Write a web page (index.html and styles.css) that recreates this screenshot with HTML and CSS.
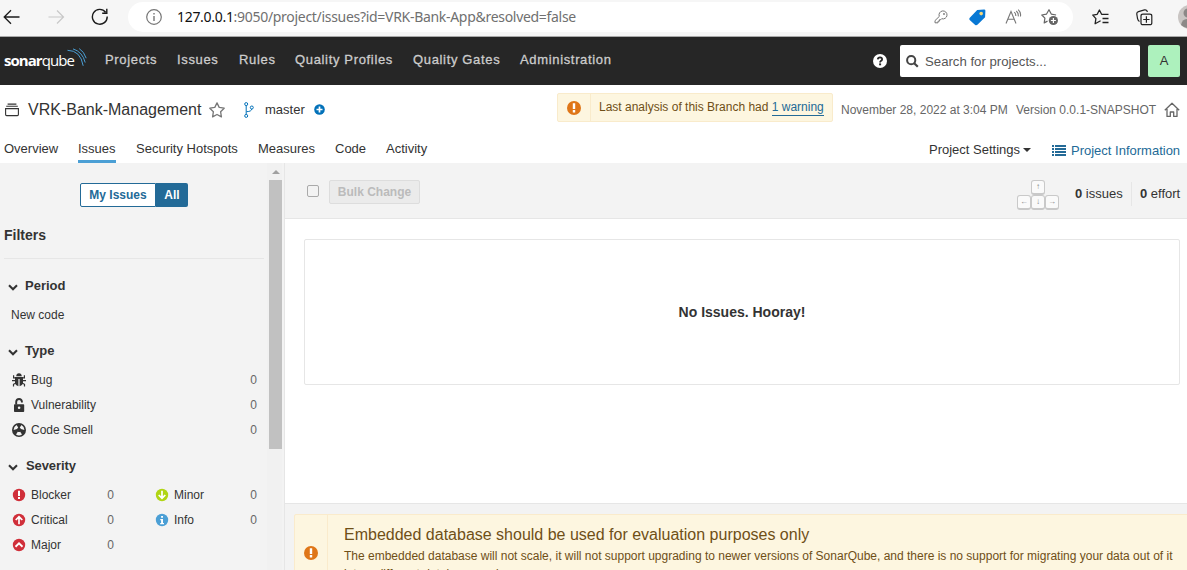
FILE: index.html
```html
<!DOCTYPE html>
<html lang="en">
<head>
<meta charset="utf-8">
<title>Issues - VRK-Bank-Management</title>
<link rel="stylesheet" href="styles.css">
</head>
<body>
<div class="browser">
  <svg class="b-back" width="18" height="16" viewBox="0 0 18 16"><path d="M16.5 8H1.5M8 1.2L1.2 8L8 14.8" fill="none" stroke="#1b1b1b" stroke-width="1.3"/></svg>
  <svg class="b-fwd" width="18" height="16" viewBox="0 0 18 16"><path d="M.5 8H15.5M9 1.5L15.5 8L9 14.5" fill="none" stroke="#c8c8c8" stroke-width="1.2"/></svg>
  <svg class="b-reload" width="18" height="18" viewBox="0 0 18 18"><path d="M16.2 8.5A7.4 7.4 0 1 1 14.6 4.2M15.8 .8V5.3H11.2" fill="none" stroke="#1b1b1b" stroke-width="1.4"/></svg>
  <div class="address">
    <svg class="b-info" width="16" height="16" viewBox="0 0 16 16"><circle cx="8" cy="8" r="7.3" fill="none" stroke="#767676" stroke-width="1.2"/><path d="M8 7V12M8 4V5.6" stroke="#767676" stroke-width="1.4"/></svg>
    <span class="url"><b>127.0.0.1</b>:9050/project/issues?id=VRK-Bank-App&amp;resolved=false</span>
    <svg class="b-key" width="14" height="14" viewBox="0 0 14 14"><path d="M5.3 6.4A4 4 0 1 1 7.7 8.7L6.8 9.7H5.4V11.2H4V12.8H1V10.6Z" fill="none" stroke="#777" stroke-linejoin="round"/><circle cx="10" cy="4" r=".9" fill="#777"/></svg>
    <svg class="b-tag" width="17" height="17" viewBox="0 0 17 17"><path d="M8.2 .9L15 .5Q16.4 .4 16.4 1.8L16.1 8.2L8.4 15.8Q7.3 16.7 6.2 15.9L.7 11Q-.1 9.8 .8 8.7Z" fill="#0878d4"/><circle cx="12.2" cy="4.6" r="1.8" fill="#f5d77a"/></svg>
    <svg class="b-read" width="17" height="16" viewBox="0 0 17 16"><path d="M1 14.5L6 2.5L11 14.5M2.9 10.2H9.1M9.3 3.2Q11 4.8 10.8 7M11.3 2Q13.7 4.3 13.2 7.3M13.2 .7Q16.3 3.6 15.4 7.5" fill="none" stroke="#777" stroke-width="1.1"/></svg>
    <svg class="b-fav" width="18" height="18" viewBox="0 0 18 18"><path d="M6.5 13.1L3.2 14.9L3.9 10.2L.8 7L5.4 6.2L8 1.7L10.4 6.2L15.1 7" fill="none" stroke="#666" stroke-width="1.2" stroke-linejoin="round"/><circle cx="12.4" cy="12.5" r="4.6" fill="#666"/><path d="M12.4 10V15M9.9 12.5H14.9" stroke="#fff" stroke-width="1.2"/></svg>
  </div>
  <svg class="b-favs" width="18" height="16" viewBox="0 0 18 16"><path d="M8.6 11.8L3.1 14.8L3.9 9.6L.8 6.1L5.2 5.3L7.4 1L9.6 5.3H16.5M10.5 9.5H16.5M10.5 13.5H16.5" fill="none" stroke="#222" stroke-width="1.3" stroke-linejoin="round"/></svg>
  <svg class="b-coll" width="17" height="17" viewBox="0 0 17 17"><path d="M3.5 12.5C2 12 1.8 10.8 1.5 9.5L.8 5.2Q.5 3.2 2.5 2.6L8.5 .9Q10.5 .5 11.2 2.3V3M5 6.9Q5 5.2 7 5.2H13.8Q15.8 5.2 15.8 6.9V13.9Q15.8 15.7 13.8 15.7H7Q5 15.7 5 13.9ZM10.4 7.2V13.7M7.2 10.5H13.6" fill="none" stroke="#222" stroke-width="1.2"/></svg>
  <svg class="b-user" width="9" height="24" viewBox="0 0 9 24"><circle cx="12" cy="12" r="12" fill="#c9c5c3"/><circle cx="10" cy="8" r="4.5" fill="#8c8887"/><path d="M3 20Q4 14 9 14V23Q5 22 3 20Z" fill="#8c8887"/></svg>
</div>

<header class="global">
  <div class="logo"><span class="logo-b">sonar</span><span class="logo-l">qube</span>
    <svg class="waves" width="20" height="19" viewBox="0 0 20 19"><path d="M.5 2.3Q13.5 2.3 16.2 17.8M6 .9Q15.5 3.8 18.2 14.5M12.2 .6Q17 3.5 19.2 10.2" fill="none" stroke="#4b9fd5" stroke-width="1"/></svg>
  </div>
  <nav class="menu"><a class="m1">Projects</a><a class="m2">Issues</a><a class="m3">Rules</a><a class="m4">Quality Profiles</a><a class="m5">Quality Gates</a><a class="m6">Administration</a></nav>
  <svg class="help" width="14" height="14" viewBox="0 0 14 14"><circle cx="7" cy="7" r="7" fill="#fff"/><path d="M4.8 5.3Q5 3.4 7 3.4Q9.2 3.5 9.1 5.3Q9 6.4 7.8 7Q7.1 7.4 7.1 8.4" fill="none" stroke="#262626" stroke-width="1.8"/><rect x="6.1" y="9.4" width="2" height="1.9" fill="#262626"/></svg>
  <div class="search"><svg width="13" height="13" viewBox="0 0 13 13"><circle cx="5.2" cy="5.2" r="4.1" fill="none" stroke="#444" stroke-width="2"/><path d="M8.2 8.2L11.8 11.8" stroke="#444" stroke-width="2.2"/></svg><span>Search for projects...</span></div>
  <div class="avatar">A</div>
</header>

<section class="project">
  <div class="crumbs">
    <svg class="p-icon" width="14" height="14" viewBox="0 0 14 14"><path d="M.6 5.6H13.4V11.6Q13.4 12.6 12.4 12.6H1.6Q.6 12.6 .6 11.6ZM1.2 3.3H12.8M2.6 1.1H11.4" fill="none" stroke="#333" stroke-width="1.1"/></svg>
    <h1>VRK-Bank-Management</h1>
    <svg class="star" width="16" height="16" viewBox="0 0 16 16"><path d="M8 .9L10.2 5.4L15.2 6.2L11.6 9.7L12.4 14.9L8 12.5L3.6 14.9L4.4 9.7L.8 6.2L5.8 5.4Z" fill="none" stroke="#777" stroke-width="1.3" stroke-linejoin="round"/></svg>
    <svg class="branch" width="10" height="16" viewBox="0 0 10 16"><g fill="none" stroke="#0271b9"><circle cx="2.2" cy="2.1" r="1.5"/><circle cx="2.2" cy="13.9" r="1.5"/><circle cx="7.8" cy="5.5" r="1.5"/><path d="M2.2 3.6V12.4M7.8 7Q7.5 9.5 2.5 9.7"/></g></svg>
    <span class="master">master</span>
    <svg class="plus" width="11" height="11" viewBox="0 0 11 11"><circle cx="5.5" cy="5.5" r="5.3" fill="#0271b9"/><path d="M5.5 2.5V8.5M2.5 5.5H8.5" stroke="#fff" stroke-width="1.7"/></svg>
    <div class="warning"><span class="warn-icon"><svg width="14" height="14" viewBox="0 0 14 14"><circle cx="7" cy="7" r="7" fill="#df7618"/><path d="M5.8 2.3H8.2V8H5.8ZM5.8 9.1H8.2V11.4H5.8Z" fill="#fff"/></svg></span><span class="warn-text">Last analysis of this Branch had <a>1 warning</a></span></div>
    <span class="date">November 28, 2022 at 3:04 PM</span>
    <span class="version">Version 0.0.1-SNAPSHOT</span>
    <svg class="home" width="16" height="16" viewBox="0 0 16 16"><path d="M.8 8.2L8 1.2L15.2 8.2M3 7V14.4H6.3V10H9.7V14.4H13V7" fill="none" stroke="#666" stroke-width="1.3" stroke-linejoin="round"/></svg>
  </div>
  <nav class="tabs"><a class="t1">Overview</a><a class="t2 active">Issues</a><a class="t3">Security Hotspots</a><a class="t4">Measures</a><a class="t5">Code</a><a class="t6">Activity</a>
    <span class="settings">Project Settings</span><i class="caret"></i>
    <svg class="list" width="14" height="11" viewBox="0 0 14 11"><path d="M0 1H2M3 1H14M0 4H2M3 4H14M0 7H2M3 7H14M0 10H2M3 10H14" stroke="#236a97" stroke-width="2"/></svg><span class="info">Project Information</span>
  </nav>
</section>

<div class="page">
  <aside class="side">
    <div class="filters">
      <div class="toggle"><button class="mine">My Issues</button><button class="all">All</button></div>
      <h2>Filters</h2>
      <div class="facet period"><svg class="chev" width="10" height="7" viewBox="0 0 10 7"><path d="M1 1.3L5 5.2L9 1.3" fill="none" stroke="#333" stroke-width="2.1"/></svg>Period</div>
      <div class="newcode">New code</div>
      <div class="facet type"><svg class="chev" width="10" height="7" viewBox="0 0 10 7"><path d="M1 1.3L5 5.2L9 1.3" fill="none" stroke="#333" stroke-width="2.1"/></svg>Type</div>
      <div class="row"><svg width="14" height="14" viewBox="0 0 14 14"><path d="M4.2 3.2Q4.4 .3 7 .3Q9.6 .3 9.8 3.2ZM3 4H11V10.2Q10.2 13 7.6 13.3V6H6.4V13.3Q3.8 13 3 10.2Z" fill="#333"/><path d="M3.7 4.8H1.6V2.2M10.3 4.8H12.4V2.2M4 7.7H0M10 7.7H14M4 10L1.5 11.3V13.6M10 10L12.5 11.3V13.6" fill="none" stroke="#333" stroke-width="1.2"/></svg><span>Bug</span><b>0</b></div>
      <div class="row"><svg width="14" height="14" viewBox="0 0 14 14"><path d="M4.2 6.5V3.9Q4.3 1 7.1 1Q9.6 1 9.9 3.7V4.6" fill="none" stroke="#333" stroke-width="1.9"/><path fill-rule="evenodd" d="M2.5 6.2H11.4Q12.2 6.2 12.2 7V13.2Q12.2 14 11.4 14H2.8Q2 14 2 13.2V7Q2 6.2 2.8 6.2ZM7.1 8.5A1.3 1.3 0 0 0 7.1 11.1A1.3 1.3 0 0 0 7.1 8.5Z" fill="#333"/></svg><span>Vulnerability</span><b>0</b></div>
      <div class="row"><svg width="14" height="14" viewBox="0 0 14 14"><circle cx="7" cy="7" r="7" fill="#333"/><path d="M5 6.1L1.6 7Q1.7 3.6 4.5 2L6.2 4.6ZM9 6.1L12.4 7Q12.3 3.6 9.5 2L7.8 4.6ZM5.8 8.7L4 11.5Q7 13.3 10 11.5L8.2 8.7Q7 9.3 5.8 8.7Z" fill="#f3f3f3"/></svg><span>Code Smell</span><b>0</b></div>
      <div class="facet severity"><svg class="chev" width="10" height="7" viewBox="0 0 10 7"><path d="M1 1.3L5 5.2L9 1.3" fill="none" stroke="#333" stroke-width="2.1"/></svg>Severity</div>
      <div class="grid">
        <div class="row"><svg width="14" height="14" viewBox="0 0 14 14"><circle cx="7" cy="7" r="6.2" fill="#d02f3a"/><path d="M6 2.8H8V8H6ZM6 9.1H8V11.1H6Z" fill="#fff"/></svg><span>Blocker</span><b>0</b></div>
        <div class="row"><svg width="14" height="14" viewBox="0 0 14 14"><circle cx="7" cy="7" r="6.2" fill="#b0d513"/><path d="M7 2.8V10M3.7 7L7 10.2L10.3 7" fill="none" stroke="#fff" stroke-width="1.7"/></svg><span>Minor</span><b>0</b></div>
        <div class="row"><svg width="14" height="14" viewBox="0 0 14 14"><circle cx="7" cy="7" r="6.2" fill="#d02f3a"/><path d="M7 11.2V4M3.7 7L7 3.8L10.3 7" fill="none" stroke="#fff" stroke-width="1.7"/></svg><span>Critical</span><b>0</b></div>
        <div class="row"><svg width="14" height="14" viewBox="0 0 14 14"><circle cx="7" cy="7" r="6.2" fill="#4b9fd5"/><path d="M6.1 2.9H8V4.7H6.1ZM5.3 6H8V10H9V11.2H5.2V10H6.1V7.2H5.3Z" fill="#fff"/></svg><span>Info</span><b>0</b></div>
        <div class="row"><svg width="14" height="14" viewBox="0 0 14 14"><circle cx="7" cy="7" r="6.2" fill="#d02f3a"/><path d="M3.5 8.7L7 5.4L10.5 8.7" fill="none" stroke="#fff" stroke-width="1.9"/></svg><span>Major</span><b>0</b></div>
      </div>
    </div>
    <div class="scroll"><i class="up"></i><div class="thumb"></div></div>
  </aside>
  <main>
    <div class="toolbar">
      <span class="check"></span><button class="bulk">Bulk Change</button>
      <div class="keys"><div><kbd>↑</kbd></div><div><kbd>←</kbd><kbd>↓</kbd><kbd>→</kbd></div></div>
      <span class="count"><b>0</b> issues</span><span class="effort"><b>0</b> effort</span>
    </div>
    <div class="results"><div class="empty">No Issues. Hooray!</div></div>
    <footer>
      <div class="notice"><div class="n-icon"><svg width="14" height="14" viewBox="0 0 14 14"><circle cx="7" cy="7" r="7" fill="#df7618"/><path d="M5.8 2.3H8.2V8H5.8ZM5.8 9.1H8.2V11.4H5.8Z" fill="#fff"/></svg></div>
        <div class="n-text"><h3>Embedded database should be used for evaluation purposes only</h3><p>The embedded database will not scale, it will not support upgrading to newer versions of SonarQube, and there is no support for migrating your data out of it<br>into a different database engine.</p></div></div>
    </footer>
  </main>
</div>
</body>
</html>
```
FILE: styles.css
```css
* { box-sizing: border-box; }
body { margin: 0; width: 1187px; height: 570px; overflow: hidden; display: flex; flex-direction: column; font: 13px/20px "Liberation Sans", Arial, sans-serif; color: #333; background: #fff; }
svg { display: block; flex: none; }
span, a { white-space: nowrap; }
h1, h2, h3, p { margin: 0; }
button { font: inherit; padding: 0; margin: 0; }

.browser { flex: 0 0 37px; display: flex; align-items: center; background: #f6f6f6; border-bottom: 1px solid #a9a9a9; padding: 0 0 2px 3px; overflow: hidden; }
.b-fwd { margin-left: 27px; }
.b-reload { margin-left: 25px; }
.address { display: flex; align-items: center; width: 945px; height: 30px; margin-left: 19px; padding-left: 18px; border-radius: 15px; background: #fff; }
.url { width: 399px; margin-left: 15px; font: 14px/20px "Noto Sans", sans-serif; letter-spacing: -.3px; color: #707070; }
.url b { font-weight: 400; color: #111; }
.b-key { margin-left: 358px; }
.b-tag { margin-left: 21px; }
.b-read { margin-left: 19px; }
.b-fav { margin-left: 19px; }
.b-favs { margin-left: 19px; }
.b-coll { margin-left: 26px; }
.b-user { margin-left: auto; }

.global { flex: 0 0 48px; display: flex; align-items: center; background: #262626; color: #ccc; padding: 0 7px 0 4px; }
.logo { position: relative; display: flex; width: 101px; padding-bottom: 2px; font: 15px/20px "Open Sans", sans-serif; color: #fff; }
.logo-b { font-weight: 700; letter-spacing: -.95px; }
.logo-l { letter-spacing: -.9px; }
.waves { position: absolute; left: 63px; top: -2px; }
.menu { display: flex; padding-bottom: 2px; font-size: 13px; letter-spacing: .66px; -webkit-text-stroke: .3px #ccc; width: 768px; }
.m1 { width: 72px; } .m2 { width: 62px; } .m3 { width: 56px; } .m4 { width: 118px; } .m5 { width: 107px; }
.search { display: flex; align-items: center; width: 240px; height: 32px; margin-left: 13px; padding-left: 6px; gap: 6px; border-radius: 2px; background: #fff; color: #555; font-size: 13.2px; }
.search span { padding-top: 1px; }
.avatar { width: 32px; height: 32px; margin-left: 8px; border-radius: 2px; background: #adf1bd; color: #333; font-size: 13px; line-height: 32px; text-align: center; }

.project { flex: 0 0 78px; display: flex; flex-direction: column; }
.crumbs { display: flex; align-items: center; height: 49px; padding-left: 5px; }
h1 { width: 174px; margin-left: 9px; font-size: 16px; font-weight: 400; white-space: nowrap; }
.star { margin-left: 7px; }
.branch { margin-left: 19px; }
.master { width: 40px; margin-left: 11px; }
.plus { margin-left: 9px; }
.warning { display: flex; width: 276px; height: 29px; margin: -4px 0 0 232px; border: 1px solid #f9ebcb; border-radius: 2px; background: #fdf6e0; color: #6f4f17; font-size: 12px; line-height: 26px; }
.warn-icon { display: flex; align-items: center; justify-content: center; width: 33px; border-right: 1px solid #f9ebcb; }
.warn-text { margin-left: 8px; }
.warn-text a { display: inline-block; line-height: 15px; border-bottom: 1px solid #236a97; color: #236a97; }
.date { width: 167px; margin-left: 8px; font-size: 12px; color: #666; }
.version { width: 140px; margin-left: 8px; font-size: 12px; color: #666; }
.home { margin-left: 8px; }
.tabs { display: flex; height: 29px; padding-left: 4px; line-height: 29px; }
.t1 { width: 54px; } .t2 { width: 38px; } .t3 { width: 102px; } .t4 { width: 57px; } .t5 { width: 31px; } .t6 { width: 41px; }
.tabs a { margin-right: 20px; }
.active { border-bottom: 3px solid #4b9fd5; }
.settings { margin-left: 482px; width: 92px; font-size: 13px; line-height: 31px; }
.caret { width: 0; height: 0; margin: 14px 0 0 2px; border: 4px solid transparent; border-top-color: #333; border-bottom: 0; }
.list { margin: 11px 0 0 21px; }
.info { margin-left: 5px; line-height: 33px; color: #236a97; }

.page { flex: 1; display: flex; min-height: 0; }
.side { display: flex; flex: 0 0 285px; border-right: 1px solid #e6e6e6; background: #f3f3f3; }
.filters { width: 264px; margin-right: 3px; overflow: hidden; }
.toggle { display: flex; margin: 20px 0 0 80px; height: 24px; font-size: 12px; font-weight: 700; }
.mine { width: 76px; border: 1px solid #236a97; border-radius: 2px 0 0 2px; background: #fff; color: #236a97; }
.all { width: 32px; border: 0; border-radius: 0 2px 2px 0; background: #236a97; color: #fff; }
h2 { margin: 18px 0 0 4px; height: 34px; border-bottom: 1px solid #e6e6e6; font-size: 14px; line-height: 20px; }
.facet { display: flex; align-items: center; height: 20px; padding-left: 8px; font-size: 13px; font-weight: 700; }
.chev { margin: 3px 7px 0 0; }
.period { margin-top: 17px; }
.newcode { margin: 9px 0 0 11px; font-size: 12px; }
.type { margin: 16px 0 6px; }
.row { display: flex; align-items: center; height: 25px; padding: 0 7px 0 12px; font-size: 12px; }
.row span { margin-left: 5px; }
.row b { margin-left: auto; font-weight: 400; color: #666; }
.severity { margin: 14px 0 6px; letter-spacing: -.1px; }
.severity .chev { margin-right: 8px; }
.grid { display: grid; grid-template-columns: 121px 143px; }
.grid .row:nth-child(even) { padding-left: 34px; }
.scroll { width: 15px; padding: 7px 0 0 2px; background: #f1f1f1; }
.up { display: block; margin: 0 0 6px 3px; width: 0; height: 4px; border: 4px solid transparent; border-top: 0; border-bottom-color: #a0a0a0; }
.thumb { width: 13px; height: 269px; background: #c1c1c1; }

main { flex: 1; min-width: 0; display: flex; flex-direction: column; }
.toolbar { flex: 0 0 56px; display: flex; align-items: center; padding: 2px 0 0 22px; background: #f3f3f3; border-bottom: 1px solid #e6e6e6; }
.check { width: 12px; height: 12px; margin-top: -1px; border: 1px solid #aaa; border-radius: 2px; }
.bulk { width: 91px; height: 24px; margin-left: 10px; border: 1px solid #ddd; border-radius: 2px; background: #ebebeb; color: #bbb; font-size: 12px; font-weight: 700; }
.keys { margin: 7px 0 0 597px; width: 42px; }
.keys div { display: flex; justify-content: center; height: 15px; }
kbd { width: 14px; height: 15px; border: 1px solid #c9c9c9; border-bottom-width: 2px; border-radius: 3px; background: #fafafa; color: #888; font: 8px/12px "Liberation Sans", sans-serif; text-align: center; }
.count { width: 48px; margin: 4px 0 0 16px; font-size: 13px; }
.effort { height: 24px; margin: 4px 0 0 8px; padding-left: 8px; border-left: 1px solid #e6e6e6; line-height: 23px; }
.results { flex: 0 0 284px; padding: 20px 7px 0 19px; background: #fff; }
.empty { height: 146px; border: 1px solid #e6e6e6; border-radius: 2px; font-size: 14px; font-weight: 700; line-height: 145px; text-align: center; }
footer { flex: 1; padding: 10px 0 0 9px; border-top: 1px solid #e6e6e6; background: #f3f3f3; overflow: hidden; }
.notice { display: flex; width: 920px; height: 78px; border: 1px solid #faebcc; border-radius: 2px; background: #fdf6e0; color: #6f4f17; }
.n-icon { display: flex; align-items: center; justify-content: center; width: 33px; border-right: 1px solid #faebcc; }
.n-text { padding: 8px 0 0 16px; }
h3 { font-size: 16px; font-weight: 400; line-height: 24px; }
p { font-size: 12px; line-height: 18px; white-space: nowrap; }
```
